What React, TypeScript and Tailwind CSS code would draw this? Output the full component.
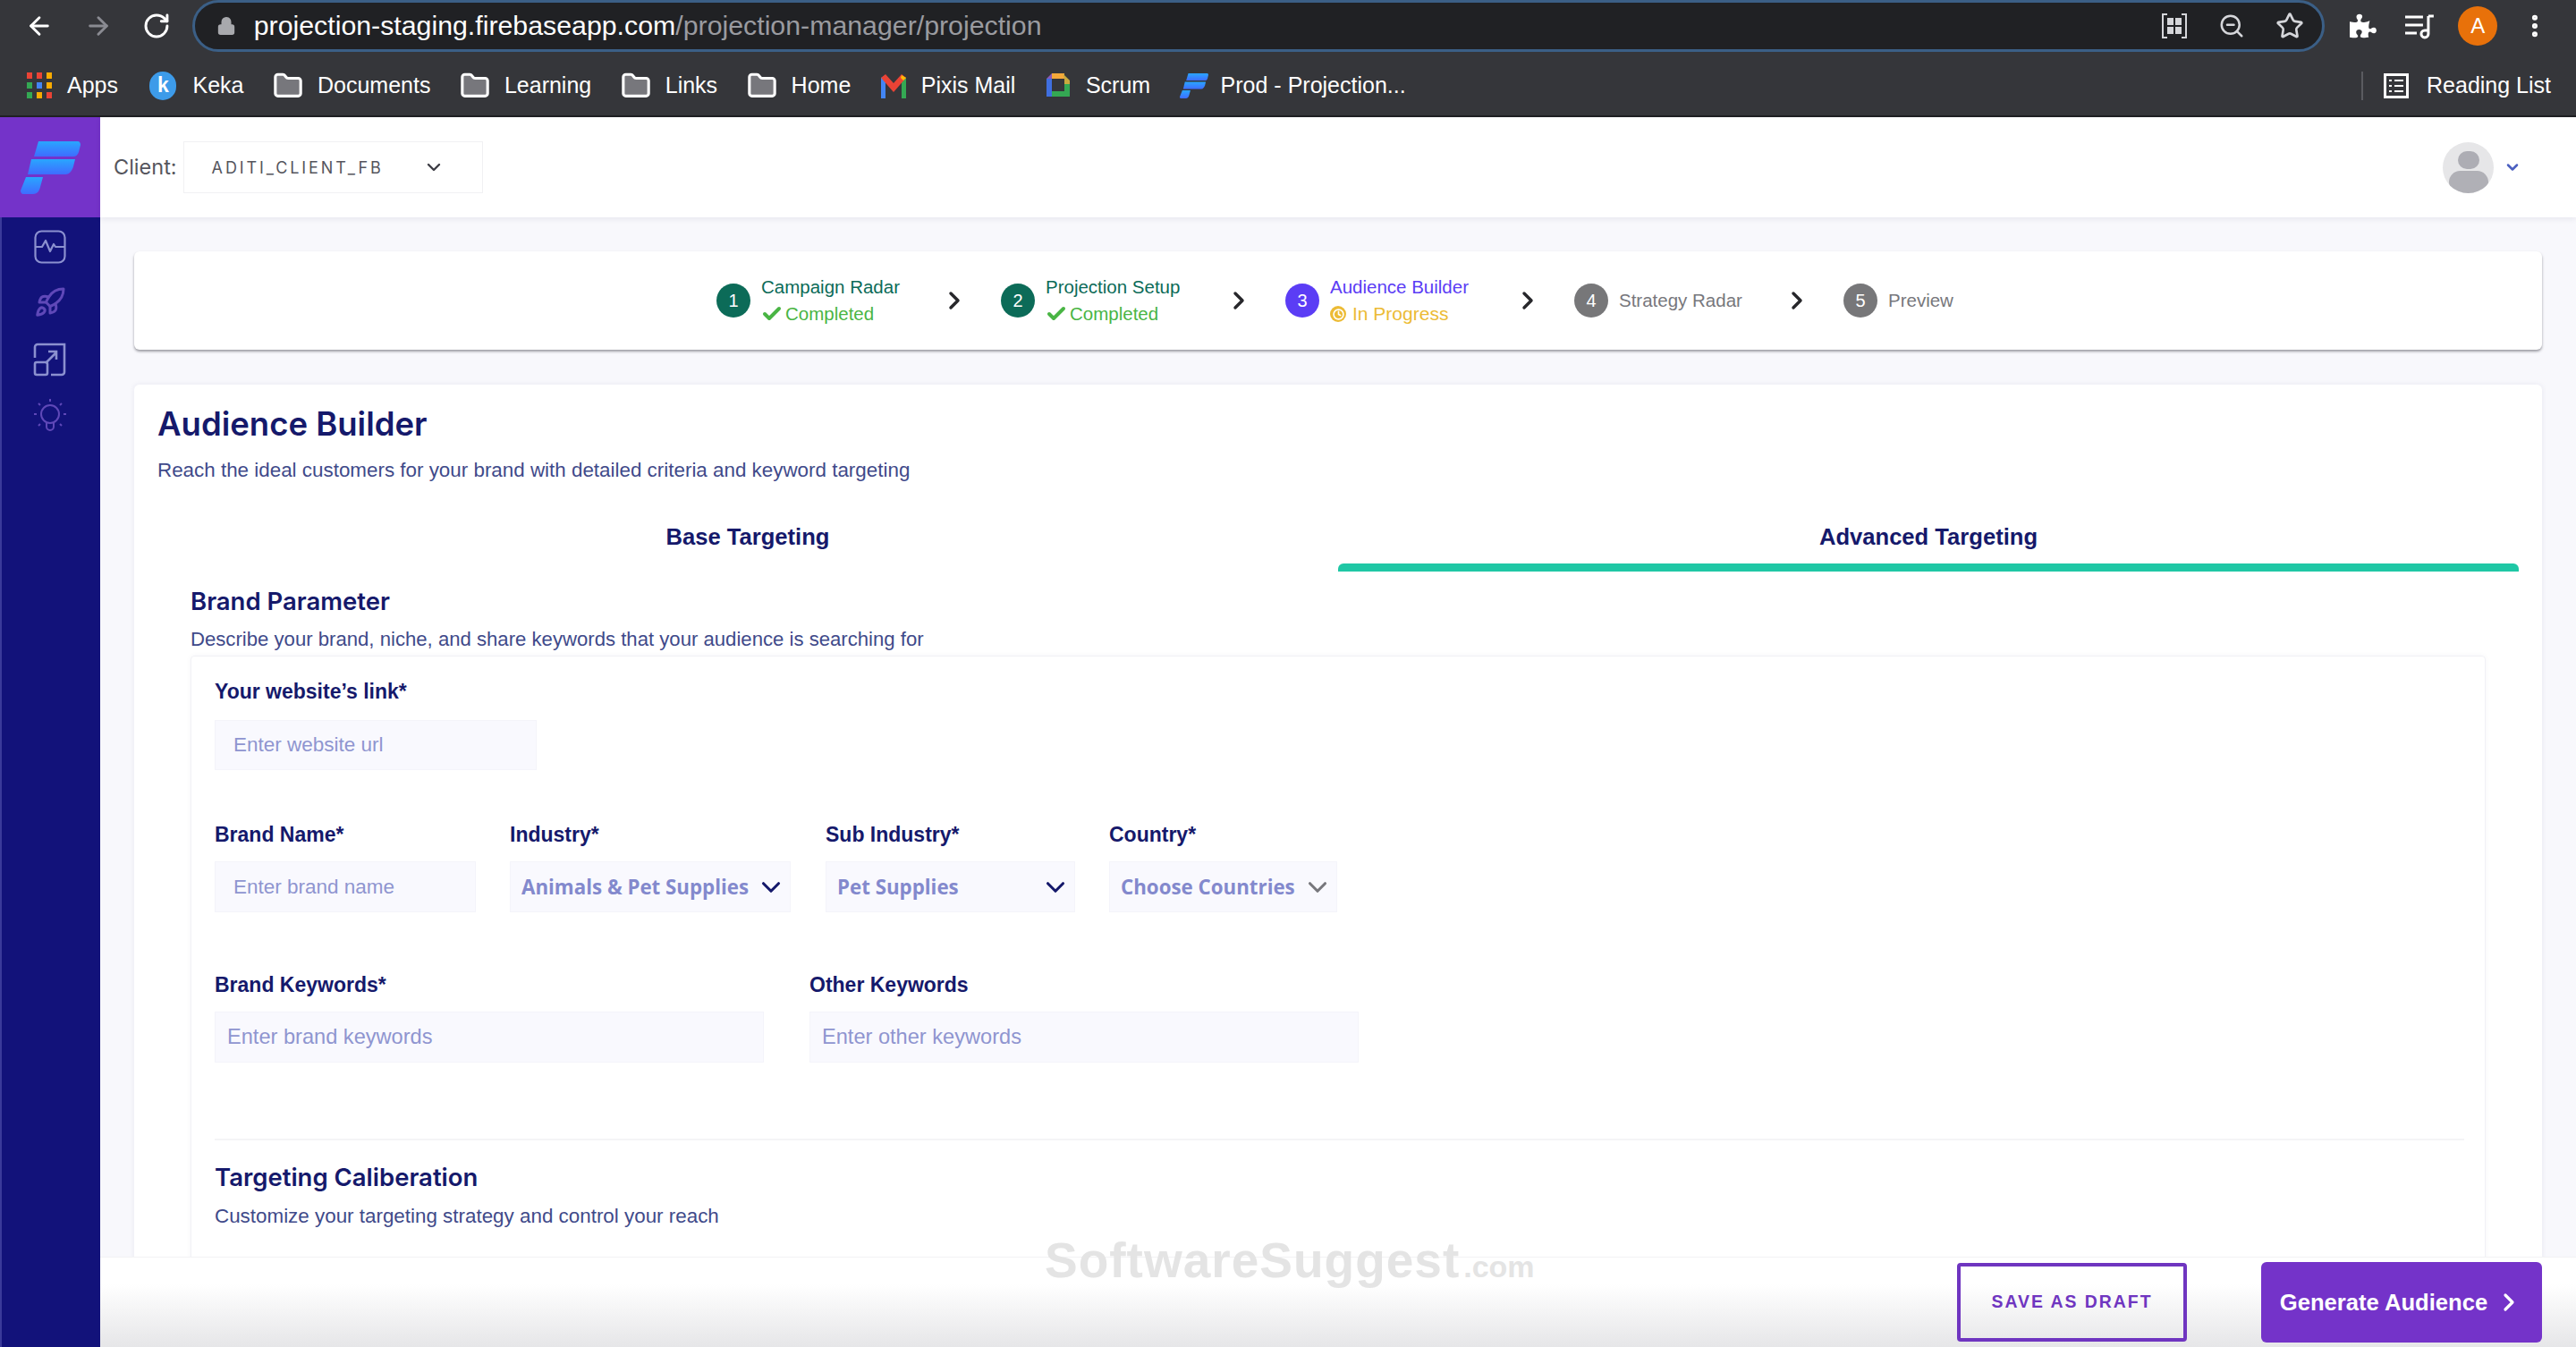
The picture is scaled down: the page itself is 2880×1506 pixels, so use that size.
import React from "react";
import { ArrowLeft, ArrowRight, RotateCw, Lock, ZoomOut, Star, EllipsisVertical, Folder, ChevronDown, ChevronRight, Check, Clock, Rocket } from "lucide-react";
import { FaPuzzlePiece } from "react-icons/fa";

const sans = "[font-family:Liberation_Sans,Arial,sans-serif]";

function AppsIcon() {
  const c = ["#ea4335", "#ea4335", "#f9ab00", "#34a853", "#4285f4", "#f9ab00", "#34a853", "#f9ab00", "#ea4335"];
  return (
    <svg width="28" height="30" viewBox="0 0 28 30">
      {c.map((col, i) => (
        <rect key={i} x={(i % 3) * 11} y={Math.floor(i / 3) * 11} width="6" height="7" fill={col} />
      ))}
    </svg>
  );
}

function KekaIcon() {
  return (
    <div className="w-[30px] h-[32px] rounded-full bg-[#3d9be9] flex items-center justify-center text-white font-bold text-[23px]">k</div>
  );
}

function GmailIcon() {
  return (
    <svg width="30" height="30" viewBox="0 0 30 30">
      <path d="M1 29V6l5-3v26z" fill="#4285f4" />
      <path d="M29 29V6l-5-3v26z" fill="#34a853" />
      <path d="M1 6l5-4 9 10 9-10 5 4-14 16z" fill="#ea4335" />
      <path d="M24 3l5 3-3 3-3-3z" fill="#fbbc04" />
    </svg>
  );
}

function ScrumIcon() {
  return (
    <svg width="30" height="32" viewBox="0 0 30 32">
      <path d="M8 2h14v6H8z" fill="#f4a83a" />
      <path d="M20 2l8 8v12h-6V8z" fill="#c8a93e" />
      <path d="M22 14h6v14H8v-6h14z" fill="#34a853" />
      <path d="M2 8h6v20H2z" fill="#3f6fe0" />
      <path d="M2 8l6-6v6z" fill="#8a5ab8" />
    </svg>
  );
}

function ProjectionLogo({ w, h }: { w: number; h: number }) {
  return (
    <svg width={w} height={h} viewBox="0 0 67 59">
      <defs>
        <linearGradient id="plogo" x1="0" y1="0" x2="0" y2="1">
          <stop offset="0" stopColor="#29a6ff" />
          <stop offset="1" stopColor="#3f6cff" />
        </linearGradient>
      </defs>
      <path d="M20 0h44c2 0 3 2 3 4l-2 8c-1 3-3 5-6 5H15z" fill="url(#plogo)" />
      <path d="M12 20h49l-2 8c-1 4-4 9-9 9H8z" fill="url(#plogo)" />
      <path d="M6 40h19l-3 11c-1 5-4 8-8 8H3c-2 0-3-2-3-4z" fill="url(#plogo)" />
    </svg>
  );
}

function Bookmark({ icon, label, gap = "gap-[16px]" }: { icon: React.ReactNode; label: string; gap?: string }) {
  return (
    <div className={`flex items-center ${gap} text-white text-[25px] whitespace-nowrap`}>
      {icon}
      <span>{label}</span>
    </div>
  );
}

const folder = <Folder size={34} strokeWidth={2.2} color="#ffffff" fill="#77777c" />;

function Chrome() {
  return (
    <div className="h-[131px] bg-[#35363a] border-b-2 border-[#1f2023] flex flex-col">
      <div className="h-[58px] flex items-center pl-[28px] pr-[30px]">
        <ArrowLeft size={32} color="#ffffff" strokeWidth={2.2} />
        <ArrowRight size={32} color="#8a8b92" strokeWidth={2.2} className="ml-[34px]" />
        <RotateCw size={32} color="#ffffff" strokeWidth={2.2} className="ml-[33px]" />
        <div className="ml-[24px] w-[2392px] h-[58px] rounded-full bg-[#202124] border-[3px] border-[#3b5f86] flex items-center pl-[24px] pr-[20px]">
          <Lock size={22} color="#a8a9ad" fill="#a8a9ad" />
          <div className="ml-[20px] text-[30.3px] whitespace-nowrap">
            <span className="text-white">projection-staging.firebaseapp.com</span>
            <span className="text-[#9a9ba0]">/projection-manager/projection</span>
          </div>
          <div className="ml-auto flex items-center gap-[34px]">
            <svg width="30" height="30" viewBox="0 0 30 30" fill="none">
              <path d="M7 2H2v26h5M23 2h5v26h-5" stroke="#d5d6da" strokeWidth="2" />
              <rect x="7" y="6" width="7" height="8" fill="#d5d6da" />
              <rect x="16" y="6" width="7" height="8" fill="#d5d6da" />
              <rect x="7" y="16" width="7" height="8" fill="#d5d6da" />
              <rect x="16" y="16" width="7" height="8" fill="#d5d6da" />
            </svg>
            <ZoomOut size={30} color="#d5d6da" strokeWidth={2} />
            <Star size={32} color="#d5d6da" strokeWidth={2} />
          </div>
        </div>
        <FaPuzzlePiece size={30} color="#ffffff" className="ml-[28px]" />
        <svg width="34" height="30" viewBox="0 0 34 30" className="ml-[31px]" fill="none">
          <path d="M1 5h20M1 14h20M1 23h13" stroke="#fff" strokeWidth="3" />
          <path d="M27 4v20a4 4 0 1 1-4-4h4M27 4h6" stroke="#fff" strokeWidth="3" />
        </svg>
        <div className="ml-[26px] w-[44px] h-[44px] rounded-full bg-[#e8710a] flex items-center justify-center text-white text-[24px]">A</div>
        <EllipsisVertical size={32} color="#ffffff" strokeWidth={2.6} className="ml-[26px]" />
      </div>
      <div className="flex-1 flex items-center pt-[4px] pl-[30px] pr-[28px] gap-[32.5px]">
        <Bookmark icon={<AppsIcon />} label="Apps" gap="gap-[17px]" />
        <Bookmark icon={<KekaIcon />} label="Keka" gap="gap-[18px] ml-[3px]" />
        <Bookmark icon={folder} label="Documents" />
        <Bookmark icon={folder} label="Learning" />
        <Bookmark icon={folder} label="Links" />
        <Bookmark icon={folder} label="Home" />
        <Bookmark icon={<GmailIcon />} label="Pixis Mail" />
        <Bookmark icon={<ScrumIcon />} label="Scrum" />
        <Bookmark icon={<ProjectionLogo w={32} h={30} />} label="Prod - Projection..." gap="gap-[14px]" />
        <div className="ml-auto flex items-center">
          <div className="w-[2px] h-[32px] bg-[#5a5b60] mr-[23px]" />
          <svg width="28" height="28" viewBox="0 0 28 28" fill="none">
            <rect x="1.5" y="1.5" width="25" height="25" stroke="#fff" strokeWidth="3" />
            <path d="M6 8h3M12 8h10M6 14h3M12 14h10M6 20h3M12 20h10" stroke="#fff" strokeWidth="2" />
          </svg>
          <span className="ml-[20px] text-white text-[25px] whitespace-nowrap">Reading List</span>
        </div>
      </div>
    </div>
  );
}

function Sidebar() {
  return (
    <div className="w-[112px] shrink-0 flex flex-col bg-[#12127a] border-l-2 border-[#3a3a9a]">
      <div className="h-[112px] -ml-[2px] bg-[#7433c9] flex items-center justify-center">
        <ProjectionLogo w={67} h={59} />
      </div>
      <div className="flex flex-col items-center pt-[14px] -ml-[2px]">
        <svg width="36" height="38" viewBox="0 0 36 38" fill="none" stroke="#8b90cf" strokeWidth="2.2" strokeLinejoin="round">
          <rect x="1.5" y="1.5" width="33" height="35" rx="7" />
          <path d="M1.5 19H9l4-7 5 12 4-8 2 3h10.5" />
        </svg>
        <Rocket size={36} color="#5f48b8" strokeWidth={2} className="mt-[25px]" />
        <svg width="38" height="38" viewBox="0 0 38 38" fill="none" stroke="#8b90cf" strokeWidth="2.6" className="mt-[27px]">
          <path d="M2 17V5a3 3 0 0 1 3-3h30v31a3 3 0 0 1-3 3H20" />
          <rect x="2" y="22" width="14" height="14" rx="2" />
          <path d="M14 23l12-12M17 10h9v9" />
        </svg>
        <svg width="36" height="38" viewBox="0 0 36 38" fill="none" stroke="#5f48b8" strokeWidth="2" className="mt-[24px]">
          <circle cx="18" cy="18" r="10" />
          <path d="M14 28v4a4 4 0 0 0 8 0v-4M18 1v3M5 6l2 2M31 6l-2 2M0 18h3M33 18h3M5 31l2-2M31 31l-2-2" />
        </svg>
      </div>
    </div>
  );
}

function Header() {
  return (
    <div className="h-[112px] shrink-0 bg-white shadow-[0_2px_6px_rgba(30,30,80,0.08)] flex items-center pl-[15px] pr-[61px] z-10">
      <span className="text-[23.5px] text-[#55555d] [font-family:Inter,sans-serif]">Client:</span>
      <div className="ml-[7px] w-[335px] h-[58px] border border-[#f1f1f3] flex items-center pl-[31px] pr-[42px] justify-between">
        <span className="text-[18px] tracking-[2.9px] text-[#55555d] [font-family:Inter,sans-serif]">ADITI_CLIENT_FB</span>
        <ChevronDown size={24} color="#3d3d45" strokeWidth={2.4} />
      </div>
      <div className="ml-auto flex items-center gap-[11px]">
        <div className="w-[57px] h-[57px] rounded-full bg-[#e6e6e8] overflow-hidden flex flex-col items-center">
          <div className="mt-[10px] w-[24px] h-[24px] rounded-full bg-[#adadb4]" />
          <div className="mt-[2px] w-[44px] h-[30px] rounded-full bg-[#b0b0b6]" />
        </div>
        <ChevronDown size={20} color="#4a5fc0" strokeWidth={3} />
      </div>
    </div>
  );
}

type StepProps = { n: number; title: string; status?: "done" | "progress"; w: string; last?: boolean };

function Step({ n, title, status, w, last }: StepProps) {
  const circle = status === "done" ? "bg-[#0c6b58]" : status === "progress" ? "bg-[#5b3df5]" : "bg-[#777779]";
  const titleCol = status === "done" ? "text-[#0c6b58]" : status === "progress" ? "text-[#5b3df5]" : "text-[#77777c]";
  return (
    <div className={`flex items-center ${w}`}>
      <div className={`w-[38px] h-[38px] rounded-full ${circle} text-white text-[20px] flex items-center justify-center shrink-0`}>{n}</div>
      <div className="ml-[12px] flex flex-col">
        <span className={`text-[20.5px] leading-[30px] whitespace-nowrap ${titleCol}`}>{title}</span>
        {status === "done" && (
          <span className="flex items-center text-[20.5px] leading-[30px] text-[#49b544] whitespace-nowrap">
            <Check size={24} strokeWidth={4} className="mr-[3px]" />
            Completed
          </span>
        )}
        {status === "progress" && (
          <span className="flex items-center text-[21px] leading-[30px] text-[#ecbb35] whitespace-nowrap">
            <span className="w-[18px] h-[18px] rounded-full bg-[#ecbb35] flex items-center justify-center mr-[7px]">
              <Clock size={13} color="#ffffff" strokeWidth={3} />
            </span>
            In Progress
          </span>
        )}
      </div>
      {!last && <ChevronRight size={32} color="#27272b" strokeWidth={2.6} className="ml-auto mr-[36px] shrink-0" />}
    </div>
  );
}

function Label({ children }: { children: React.ReactNode }) {
  return <div className="h-[30px] leading-[30px] text-[23px] font-bold text-[#15196b] whitespace-nowrap">{children}</div>;
}

function TextField({ label, placeholder, w, h = "h-[57px]", pl = "pl-[20px]", mt = "mt-[15px]", size = "text-[22.5px]" }: { label: string; placeholder: string; w: string; h?: string; pl?: string; mt?: string; size?: string }) {
  return (
    <div className={w}>
      <Label>{label}</Label>
      <div className={`${mt} ${h} bg-[#f9f9fe] border border-[#f4f4fa] flex items-center ${pl} ${size} text-[#8f95d0] whitespace-nowrap`}>{placeholder}</div>
    </div>
  );
}

function SelectField({ label, value, w, chev = "#15196b" }: { label: string; value: string; w: string; chev?: string }) {
  return (
    <div className={w}>
      <Label>{label}</Label>
      <div className="mt-[15px] h-[57px] bg-[#f9f9fe] border border-[#f4f4fa] flex items-center pl-[12px] pr-[4px] justify-between">
        <span className="text-[22.3px] font-bold text-[#8389cd] [font-family:Open_Sans,sans-serif] whitespace-nowrap">{value}</span>
        <ChevronDown size={34} color={chev} strokeWidth={2.2} />
      </div>
    </div>
  );
}

function Form() {
  return (
    <div className="mx-[37px] mt-[4px] flex-1 border border-[#f1f1f5] rounded-t-[4px] shadow-[0_0_6px_rgba(40,40,100,0.04)] pt-[24px] pl-[26px] pr-[23px]">
      <TextField label="Your website’s link*" placeholder="Enter website url" w="w-[360px]" h="h-[56px]" mt="mt-[17px]" />
      <div className="mt-[57px] flex">
        <TextField label="Brand Name*" placeholder="Enter brand name" w="w-[292px] mr-[38px]" />
        <SelectField label="Industry*" value="Animals & Pet Supplies" w="w-[314px] mr-[39px]" />
        <SelectField label="Sub Industry*" value="Pet Supplies" w="w-[279px] mr-[38px]" />
        <SelectField label="Country*" value="Choose Countries" w="w-[255px]" chev="#77777c" />
      </div>
      <div className="mt-[66px] flex">
        <TextField label="Brand Keywords*" placeholder="Enter brand keywords" w="w-[614px] mr-[51px]" pl="pl-[13px]" size="text-[23.6px]" />
        <TextField label="Other Keywords" placeholder="Enter other keywords" w="w-[614px]" pl="pl-[13px]" size="text-[23.6px]" />
      </div>
      <div className="mt-[85px] h-[2px] bg-[#f4f4f6]" />
      <div className="mt-[25px] h-[32px] leading-[32px] text-[27.5px] font-semibold text-[#15196b] [font-family:Inter,sans-serif]">Targeting Caliberation</div>
      <div className="mt-[14px] h-[28px] leading-[28px] text-[22.4px] text-[#3f4a8a]">Customize your targeting strategy and control your reach</div>
    </div>
  );
}

export default function App() {
  return (
    <div className={`w-[2880px] h-[1506px] overflow-hidden flex flex-col bg-white ${sans}`}>
      <Chrome />
      <div className="flex-1 flex min-h-0">
        <Sidebar />
        <div className="relative flex-1 flex flex-col min-w-0 bg-[#f8f8fc]">
          <Header />
          <div className="flex-1 flex flex-col min-h-0 px-[38px] pt-[38px]">
            <div className="h-[110px] shrink-0 bg-white rounded-[6px] shadow-[0_2px_3px_rgba(40,40,50,0.45)] flex items-center justify-center pr-[4px]">
              <Step n={1} title="Campaign Radar" status="done" w="w-[318px]" />
              <Step n={2} title="Projection Setup" status="done" w="w-[318px]" />
              <Step n={3} title="Audience Builder" status="progress" w="w-[323px]" />
              <Step n={4} title="Strategy Radar" w="w-[301px]" />
              <Step n={5} title="Preview" w="w-[126px]" last />
            </div>
            <div className="mt-[39px] flex-1 min-h-0 bg-white rounded-t-[6px] shadow-[0_0_6px_rgba(40,40,100,0.08)] px-[26px] pt-[22px] flex flex-col">
              <h1 className="h-[44px] leading-[44px] text-[36.5px] font-semibold text-[#15196b] [font-family:Inter,sans-serif]">Audience Builder</h1>
              <p className="mt-[15px] h-[30px] leading-[30px] text-[22.4px] text-[#3f4a8a] whitespace-nowrap">Reach the ideal customers for your brand with detailed criteria and keyword targeting</p>
              <div className="mt-[34px] grid grid-cols-2 h-[64px] shrink-0">
                <div className="pt-[10px] text-center text-[25.6px] leading-[30px] font-bold text-[#15196b]">Base Targeting</div>
                <div className="flex flex-col justify-between pt-[10px] text-center text-[25.6px] leading-[30px] font-bold text-[#15196b]">
                  <span>Advanced Targeting</span>
                  <div className="h-[9px] bg-[#1fc7a5] rounded-t-[6px]" />
                </div>
              </div>
              <div className="mx-[37px] mt-[17px] h-[32px] leading-[32px] text-[27.5px] font-semibold text-[#15196b] [font-family:Inter,sans-serif]">Brand Parameter</div>
              <div className="mx-[37px] mt-[13px] h-[28px] leading-[28px] text-[22.15px] text-[#3f4a8a]">Describe your brand, niche, and share keywords that your audience is searching for</div>
              <Form />
            </div>
          </div>
          <div className="absolute left-0 right-0 bottom-0 h-[101px] border-t border-[#f2f2f4] bg-gradient-to-b from-white from-[30%] to-[#e6e6e8] flex items-center justify-end pr-[38px]">
            <button className="w-[257px] h-[88px] border-[4px] border-[#6f35c0] rounded-[4px] text-[#6f35c0] text-[19.4px] font-bold tracking-[2px]">SAVE AS DRAFT</button>
            <button className="ml-[83px] w-[314px] h-[90px] bg-[#7433c9] rounded-[6px] text-white text-[25.6px] font-bold flex items-center justify-center gap-[8px]">
              Generate Audience
              <ChevronRight size={32} strokeWidth={2.4} />
            </button>
          </div>
          <div className="absolute left-[1056px] bottom-[62px] flex items-baseline text-[#e4e4e4] font-bold pointer-events-none">
            <span className="text-[55px] leading-[70px] tracking-[1px]">SoftwareSuggest</span>
            <span className="ml-[4px] text-[34px]">.com</span>
          </div>
        </div>
      </div>
    </div>
  );
}
